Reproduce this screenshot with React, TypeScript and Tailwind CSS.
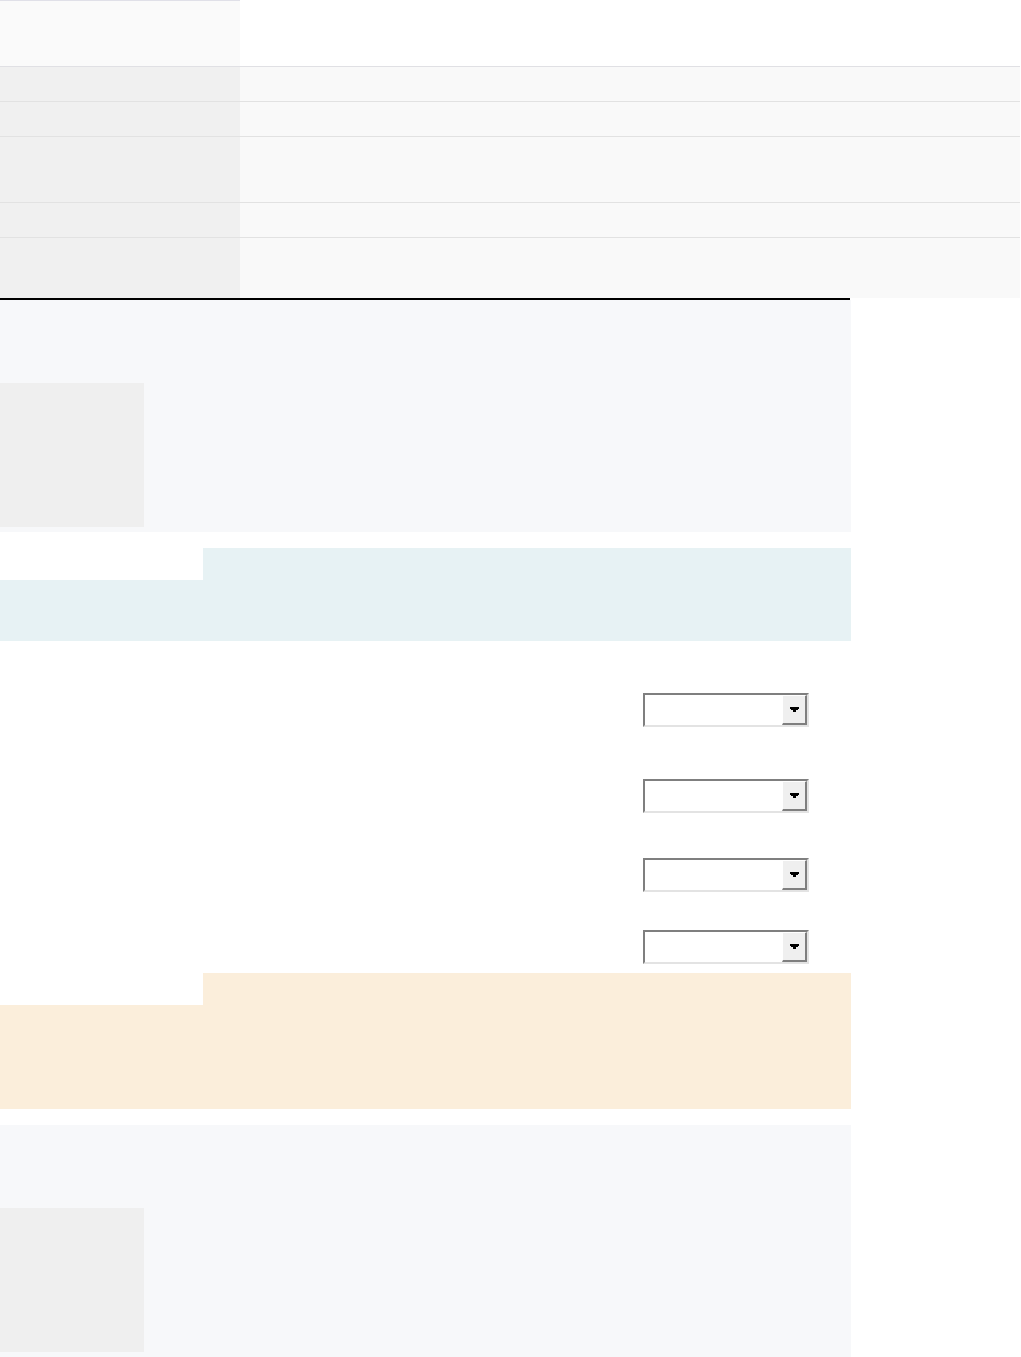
import React from "react";

const rows = [
  { h: "h-[35px]" },
  { h: "h-[35px]" },
  { h: "h-[66px]" },
  { h: "h-[35px]" },
  { h: "h-[60px]" },
];

function Select() {
  return (
    <div className="flex h-[34px] w-[166px] border-2 border-t-[#7f7f7f] border-l-[#7f7f7f] border-b-[#e3e3e3] border-r-[#e3e3e3] bg-white">
      <div className="flex-1" />
      <div className="flex w-[25px] items-center justify-center border border-t-white border-l-white border-b-2 border-r-2 border-b-[#7f7f7f] border-r-[#7f7f7f] bg-[#efefef]">
        <svg width="9" height="5" viewBox="0 0 9 5" shapeRendering="crispEdges">
          <path d="M0 0h9v2H8v1H6v2H3V3H1V2H0z" fill="#000" />
        </svg>
      </div>
    </div>
  );
}

function Panel() {
  return (
    <div className="w-[851px] bg-[#f7f8fa] pt-[83px] pb-[5px]">
      <div className="h-[144px] w-[144px] bg-[#efefef]" />
    </div>
  );
}

function Banner({ tone, body }: { tone: string; body: string }) {
  return (
    <div className="w-[851px]">
      <div className="flex">
        <div className="w-[203px]" />
        <div className={`flex-1 ${tone} h-[32px]`} />
      </div>
      <div className={`${tone} ${body}`} />
    </div>
  );
}

export default function App() {
  return (
    <div className="min-h-[1357px] w-[1021px] bg-white" style={{ fontFamily: '"Liberation Sans", sans-serif' }}>
      <div className="w-[1020px]">
        <div className="flex h-[67px] border-b border-[#e0e0e4]">
          <div className="w-[240px] border-t border-[#e0e0e8] bg-[#fafafa]" />
          <div className="flex-1" />
        </div>
        {rows.map((r, i) => (
          <div key={i} className={`flex ${r.h} ${i < rows.length - 1 ? "border-b border-[#e2e2e2]" : ""}`}>
            <div className="w-[240px] bg-[#f0f0f0]" />
            <div className="flex-1 bg-[#f9f9f9]" />
          </div>
        ))}
      </div>

      <div className="h-[2px] w-[850px] bg-black" />
      <Panel />

      <div className="mt-[16px]">
        <Banner tone="bg-[#e7f2f4]" body="h-[61px]" />
      </div>

      <div className="flex w-[851px] flex-col pl-[643px]">
        <div className="mt-[52px]"><Select /></div>
        <div className="mt-[52px]"><Select /></div>
        <div className="mt-[45px]"><Select /></div>
        <div className="mt-[38px]"><Select /></div>
      </div>

      <div className="mt-[9px]">
        <Banner tone="bg-[#fbeedb]" body="h-[104px]" />
      </div>

      <div className="mt-[16px]">
        <Panel />
      </div>
    </div>
  );
}
